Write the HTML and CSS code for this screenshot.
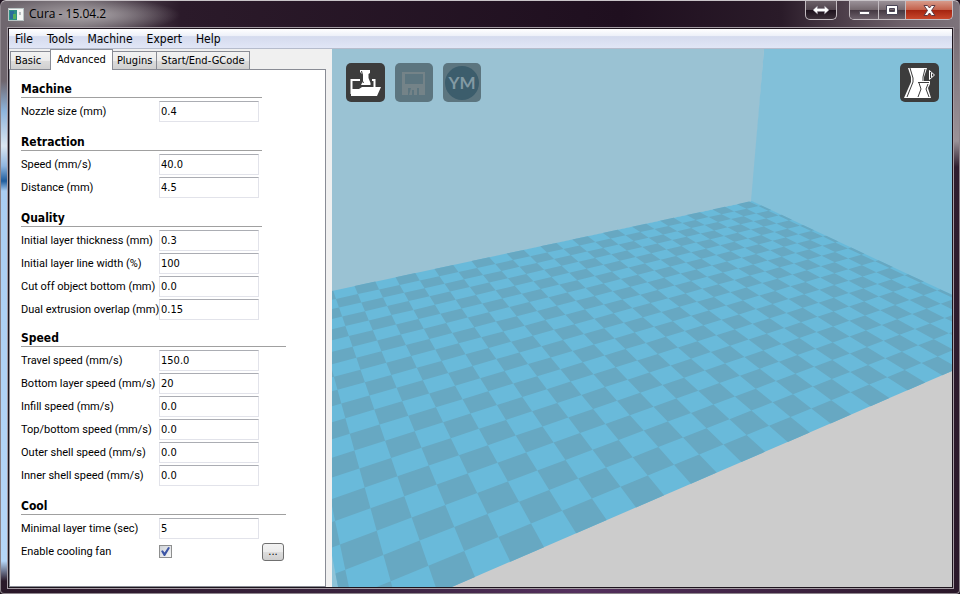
FILE: index.html
```html
<!DOCTYPE html>
<html lang="en">
<head>
<meta charset="utf-8">
<title>Cura - 15.04.2</title>
<link rel="stylesheet" href="styles.css">
</head>
<body>
<div class="window">
  <header class="titlebar">
    <svg class="app-icon" width="16" height="14" viewBox="0 0 16 14" aria-hidden="true">
      <rect x="0.5" y="0.5" width="15" height="12" fill="#f4f6f4" stroke="#b9c4c4"/>
      <rect x="1" y="2" width="8" height="10" fill="#2f8f86"/>
      <rect x="2" y="3" width="4" height="8" fill="#2d6d9a"/>
      <rect x="5" y="6" width="3" height="5" fill="#58b05e"/>
      <rect x="11" y="4" width="2" height="3" fill="#b8bec0"/>
    </svg>
    <h1 class="title">Cura - 15.04.2</h1>
    <div class="caption-buttons">
      <button class="cap cap-swap" type="button" aria-label="Move to other display">
        <svg width="18" height="10" viewBox="0 0 18 10"><path d="M1 5 5.500 1V3.500H12.500V1L17 5 12.500 9V6.500H5.500V9Z" fill="#fff" stroke="#8b8590" stroke-width=".6"/></svg>
      </button>
      <div class="cap-group">
        <button class="cap cap-min" type="button" aria-label="Minimize">
          <svg width="13" height="12" viewBox="0 0 13 12"><rect x="1.500" y="7.500" width="10" height="3" fill="#fff" stroke="#5b5560"/></svg>
        </button>
        <button class="cap cap-max" type="button" aria-label="Maximize">
          <svg width="12" height="10" viewBox="0 0 12 10"><path fill-rule="evenodd" d="M.5.500h11v9H.5ZM3.500 3.500v3h5v-3Z" fill="#fff" stroke="#4a4658"/></svg>
        </button>
        <button class="cap cap-close" type="button" aria-label="Close">
          <svg width="13" height="11" viewBox="0 0 13 11"><path d="M1 .5H4.500L6.500 3 8.500.5H12L8.500 5.500 12 10.500H8.500L6.500 8 4.500 10.500H1L4.500 5.500Z" fill="#fff" stroke="#5c3a44"/></svg>
        </button>
      </div>
    </div>
  </header>

  <div class="client">
    <nav class="menubar">
      <button type="button">File</button>
      <button type="button">Tools</button>
      <button type="button">Machine</button>
      <button type="button">Expert</button>
      <button type="button">Help</button>
    </nav>

    <div class="workspace">
      <section class="notebook">
        <div class="tabs" role="tablist">
          <button class="tab" role="tab" type="button">Basic</button>
          <button class="tab tab-active" role="tab" type="button" aria-selected="true">Advanced</button>
          <button class="tab" role="tab" type="button">Plugins</button>
          <button class="tab" role="tab" type="button">Start/End-GCode</button>
        </div>
        <form class="page">
          <div class="block">
            <fieldset>
              <h2>Machine</h2>
              <div class="row"><label for="nozzle">Nozzle size (mm)</label><input id="nozzle" type="text" value="0.4"></div>
            </fieldset>
            <fieldset>
              <h2>Retraction</h2>
              <div class="row"><label for="rspeed">Speed (mm/s)</label><input id="rspeed" type="text" value="40.0"></div>
              <div class="row"><label for="rdist">Distance (mm)</label><input id="rdist" type="text" value="4.5"></div>
            </fieldset>
            <fieldset>
              <h2>Quality</h2>
              <div class="row"><label for="ithick">Initial layer thickness (mm)</label><input id="ithick" type="text" value="0.3"></div>
              <div class="row"><label for="iwidth">Initial layer line width (%)</label><input id="iwidth" type="text" value="100"></div>
              <div class="row"><label for="cutoff">Cut off object bottom (mm)</label><input id="cutoff" type="text" value="0.0"></div>
              <div class="row"><label for="overlap">Dual extrusion overlap (mm)</label><input id="overlap" type="text" value="0.15"></div>
            </fieldset>
          </div>
          <div class="block block-wide">
            <fieldset>
              <h2>Speed</h2>
              <div class="row"><label for="travel">Travel speed (mm/s)</label><input id="travel" type="text" value="150.0"></div>
              <div class="row"><label for="bottom">Bottom layer speed (mm/s)</label><input id="bottom" type="text" value="20"></div>
              <div class="row"><label for="infill">Infill speed (mm/s)</label><input id="infill" type="text" value="0.0"></div>
              <div class="row"><label for="topbot">Top/bottom speed (mm/s)</label><input id="topbot" type="text" value="0.0"></div>
              <div class="row"><label for="outer">Outer shell speed (mm/s)</label><input id="outer" type="text" value="0.0"></div>
              <div class="row"><label for="inner">Inner shell speed (mm/s)</label><input id="inner" type="text" value="0.0"></div>
            </fieldset>
            <fieldset>
              <h2>Cool</h2>
              <div class="row"><label for="mintime">Minimal layer time (sec)</label><input id="mintime" type="text" value="5"></div>
              <div class="row"><label for="fan">Enable cooling fan</label><input id="fan" type="checkbox" checked><button class="more" type="button" aria-label="Cooling fan settings">...</button></div>
            </fieldset>
          </div>
        </form>
      </section>

      <main class="view">
        <svg class="scene" viewBox="332 49 621 538" preserveAspectRatio="xMinYMin slice" aria-hidden="true">
          <rect x="332" y="49" width="621" height="538" fill="#ccc"/>
          <path d="M332 49H764L752 201 332 292Z" fill="#9ac2d3"/>
          <path d="M764 49H953V298L751 201Z" fill="#82c0d9"/>
          <path d="M332 530V587H342Z" fill="#8dc3d8"/>
          <path id="floor" fill="#69bada"/>
          <path id="checks" fill="#67a8c2"/>
        </svg>
        <div class="tools">
          <button class="tool" type="button" aria-label="Load">
            <svg width="39" height="39" viewBox="0 0 39 39">
              <path d="M14 7H24V10L22.500 11V15L24.500 20V22H15L17 18V12L14 9Z" fill="#fff"/>
              <path d="M15.500 8 16.500 12 15.500 16 17.500 20" fill="none" stroke="#3c3c3c"/>
              <path d="M14 17H5.500V31M26 17H28.500V24" fill="none" stroke="#fff" stroke-width="2"/>
              <path d="M5 26H13L16 24H35L31 33H5Z" fill="#fff"/>
            </svg>
          </button>
          <button class="tool tool-off" type="button" aria-label="Save toolpath" disabled>
            <svg width="38" height="38" viewBox="0 0 38 38">
              <path fill-rule="evenodd" d="M7 8H30V31H24V24H22V31H19V26H17V31H14L16 24H13V31H7ZM10 10V20H28V10Z" fill="#748388"/>
            </svg>
          </button>
          <button class="tool tool-off" type="button" aria-label="Share on YouMagine" disabled>
            <svg width="38" height="38" viewBox="0 0 38 38">
              <circle cx="19" cy="19" r="17" fill="#3c5d6c"/>
              <text x="19" y="25" text-anchor="middle" class="ym">YM</text>
            </svg>
          </button>
          <button class="tool tool-mode" type="button" aria-label="View mode">
            <svg width="39" height="39" viewBox="0 0 39 39">
              <path d="M8 5H27L24 14V18H30V21L28 25 31 35H4L11 19V14Z" fill="#fff"/>
              <path d="M10 5 13 15V19L7 34M25 6 23 14V18M18 19.500H29M19 20 21 26 18 34M28 21 26 26 29 34" fill="none" stroke="#3c3c3c"/>
              <path d="M29.500 7.500V16.500L34.500 12ZM31.500 10V14" fill="none" stroke="#fff"/>
            </svg>
          </button>
        </div>
      </main>
    </div>
  </div>
</div>
<script src="floor.js"></script>
</body>
</html>
```
FILE: floor.js
```js
// Perspective projection of the build platform, one unit per checker cell.
const HORIZON = -51;
const ORIGIN = { x: 510.3, y: 561.7, w: 0.001632 };
const U = { x: 1929.5, w: 0.00003966 };
const V = { x: 215, w: 0.0000687 };
const bounds = { u0: -4.25, u1: 24.25, v0: 0, v1: 20 };

function project(u, v) {
  const w = ORIGIN.w + u * U.w + v * V.w;
  const x = (ORIGIN.x * ORIGIN.w + U.x * u * U.w + V.x * v * V.w) / w;
  const y = (ORIGIN.y * ORIGIN.w + HORIZON * (u * U.w + v * V.w)) / w;
  return x.toFixed(1) + " " + y.toFixed(1);
}

function quad(u0, v0, u1, v1) {
  return "M" + [project(u0, v0), project(u1, v0), project(u1, v1), project(u0, v1)].join("L") + "Z";
}

let checks = "";
for (let u = Math.floor(bounds.u0); u < bounds.u1; u++) {
  for (let v = bounds.v0; v < bounds.v1; v++) {
    if ((u + v) % 2 === 0) {
      checks += quad(Math.max(u, bounds.u0), v, Math.min(u + 1, bounds.u1), v + 1);
    }
  }
}
document.getElementById("floor").setAttribute("d", quad(bounds.u0, bounds.v0, bounds.u1, bounds.v1));
document.getElementById("checks").setAttribute("d", checks);
```
FILE: styles.css
```css
* { box-sizing: border-box; }

body {
  margin: 0;
  background: #1c0f1c;
  font-family: "DejaVu Sans Condensed", "DejaVu Sans", sans-serif;
  font-size: 11px;
  color: #000;
}

button, input { font: inherit; color: inherit; }

.window {
  display: flex;
  flex-direction: column;
  height: 100vh;
  padding: 0 6px 5px 7px;
  border: 1px solid #8d858c;
  border-top-color: #c9c4c8;
  border-radius: 6px 6px 4px 4px;
  background:
    linear-gradient(#6f666e, #6f666e 80px, #8db4dc 110px, #dbe6f2 145px, #8fb6e0 165px, #1f5c9c 180px, #a9cdf2 190px, #b5d6f8 560px, #2a1a2a 580px) 0 0 / 8px 100% no-repeat,
    radial-gradient(ellipse at center, #aaa4a8, #aaa4a800 70%) -10px -4px / 190px 36px no-repeat,
    linear-gradient(90deg, #6d656c, #6d656c 80px, #2b1a2a 180px, #1f0f1f 620px, #2a1b29 780px, #6d6069 900px, #7d737b) 0 0 / 100% 28px no-repeat,
    linear-gradient(#6f646d, #9a9298 140px, #2f1d2e 166px, #2a182a) 100% 0 / 7px 100% no-repeat,
    linear-gradient(90deg, #2a1728, #3b2440 40%, #54305e 60%, #2a1728);
}

.titlebar {
  display: flex;
  align-items: flex-start;
  height: 27px;
}

.app-icon { margin-top: 7px; }

.title {
  margin: 3px 0 0 5px;
  font: 12px/20px "Open Sans", "Noto Sans", sans-serif;
  color: #000;
}

.caption-buttons { display: flex; gap: 12px; margin-left: auto; }

.cap {
  display: flex;
  align-items: center;
  justify-content: center;
  height: 18px;
  padding: 0;
  border: 0;
  background: linear-gradient(#9a9198, #75696f 48%, #453943 52%, #6c606a);
}

.cap-swap, .cap-group {
  border: 1px solid #c3bcc1;
  border-top: 0;
  border-radius: 0 0 5px 5px;
  overflow: hidden;
}

.cap-swap { width: 32px; height: 19px; background: linear-gradient(#6b6068, #51454e 48%, #1e121d 52%, #3c303a); }
.cap-group { display: flex; }
.cap-min { width: 28px; }
.cap-max { width: 27px; border-left: 1px solid #c3bcc1; }
.cap-close { width: 47px; border-left: 1px solid #c3bcc1; background: linear-gradient(#d79a8a, #c4624c 48%, #a52410 52%, #c8472c); }

.client {
  flex: 1;
  display: flex;
  flex-direction: column;
  min-height: 0;
  border: 1px solid #1d141d;
  background: #f0f0f0;
  outline: 1px solid #a59da4;
}

.menubar {
  display: flex;
  gap: 14px;
  height: 20px;
  padding-left: 6px;
  border-bottom: 1px solid #b6bccc;
  background: linear-gradient(#fff, #eef1f9 35%, #d5dbee 40%, #e1e6f6);
}

.menubar button { padding: 0; border: 0; background: none; font-size: 12px; }

.workspace { flex: 1; display: flex; gap: 6px; min-height: 0; }

.notebook { display: flex; flex-direction: column; width: 317px; }

.tabs {
  display: flex;
  align-items: flex-end;
  height: 20px;
  padding-left: 1px;
}

.tab {
  height: 18px;
  min-width: 41px;
  padding: 0 4px;
  text-align: left;
  border: 1px solid #898c95;
  border-bottom: 0;
  margin-right: -1px;
  background: linear-gradient(#f2f2f2, #ebebeb 50%, #dcdcdc 52%, #cfcfcf);
}

.tab-active {
  z-index: 1;
  height: 21px;
  padding: 0 6px 2px;
  margin-bottom: -1px;
  background: #fff;
}

.page {
  flex: 1;
  display: flex;
  flex-direction: column;
  gap: 10px;
  padding: 11px;
  border: 1px solid #898c95;
  background: #fff;
}

.block { display: flex; flex-direction: column; gap: 12px; width: 241px; }
.block-wide { width: 265px; }

fieldset {
  display: flex;
  flex-direction: column;
  gap: 2px;
  min-width: 0;
  margin: 0;
  padding: 0;
  border: 0;
}

h2 {
  margin: 0 0 1px;
  border-bottom: 1px solid #a0a0a0;
  font-size: 12px;
  line-height: 16px;
}

.row {
  display: grid;
  grid-template-columns: 138px 100px 1fr;
  align-items: center;
  height: 21px;
}

.row label { font-family: Roboto, sans-serif; white-space: nowrap; }

.row input[type="text"] {
  width: 100px;
  height: 21px;
  padding: 0 1px 1px;
  border: 1px solid #e2e3ea;
  border-top-color: #abadb3;
  background: #fff;
}

.row input[type="checkbox"] {
  appearance: none;
  width: 13px;
  height: 13px;
  margin: 0;
  border: 1px solid #8e8f8f;
  background: linear-gradient(135deg, #cfd3d8, #f6f6f6);
  display: grid;
  place-items: center;
}

.row input[type="checkbox"]::before {
  content: "";
  width: 9px;
  height: 9px;
  background: #3c55a5;
  clip-path: polygon(0 45%, 20% 35%, 40% 60%, 80% 0, 100% 8%, 45% 100%, 32% 100%);
}

.more {
  justify-self: end;
  width: 22px;
  height: 18px;
  margin-right: 2px;
  padding: 0;
  border: 1px solid #707070;
  border-radius: 3px;
  background: linear-gradient(#f2f2f2, #ebebeb 50%, #dddddd 50%, #cfcfcf);
  line-height: 14px;
}

.view { position: relative; flex: 1; min-width: 0; overflow: hidden; }

.scene { position: absolute; inset: 0; width: 100%; height: 100%; }

.tools { position: relative; display: flex; gap: 10px; padding: 14px 13px 14px 14px; }

.tool {
  display: grid;
  place-items: center;
  width: 39px;
  height: 39px;
  padding: 0;
  border: 0;
  border-radius: 5px;
  background: #3c3c3c;
}

.tool-off { width: 38px; background: #5c757f; }
.tool-mode { margin-left: auto; }

.ym { font: bold 17px Lato, sans-serif; fill: #8299a3; }
```
